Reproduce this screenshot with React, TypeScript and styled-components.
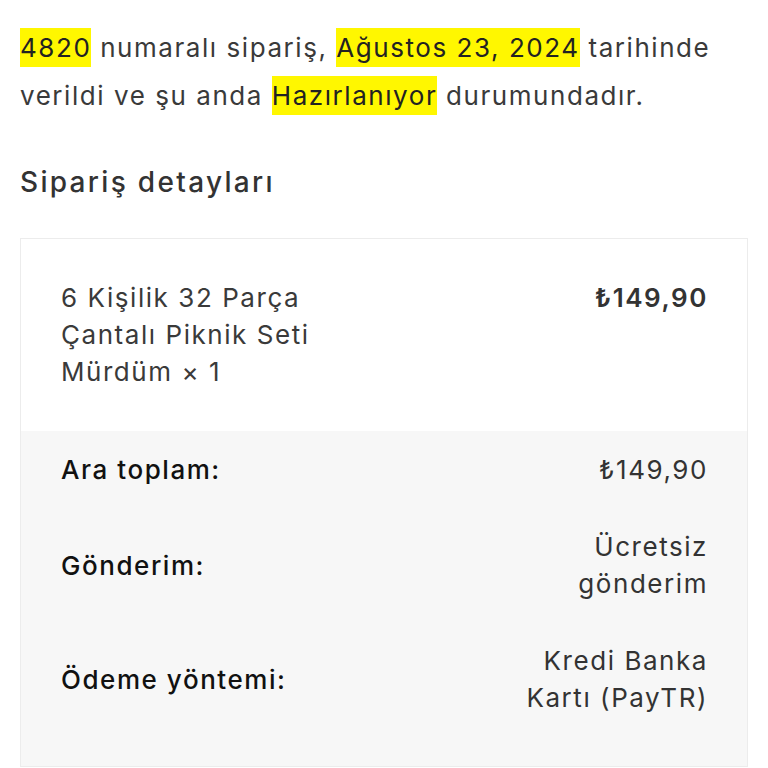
import React from 'react'
import styled, { createGlobalStyle } from 'styled-components'

const GlobalStyle = createGlobalStyle`
  body {
    margin: 0;
    background: #ffffff;
    font-family: Inter, "Noto Sans", sans-serif;
    color: #333333;
  }
`

const Page = styled.div`
  padding: 24px 20px 0 20px;
`

const Notice = styled.p`
  margin: 0;
  font-size: 26px;
  line-height: 48px;
  letter-spacing: 1.55px;
  color: #3a3a3a;
`

const Mark = styled.mark`
  background: #fff700;
  color: #222222;
  padding: 4px 0 4px 0;
`

const Heading = styled.h2`
  margin: 42px 0 36px 0;
  font-size: 28px;
  line-height: 40px;
  font-weight: 500;
  letter-spacing: 2.3px;
  color: #333333;
`

const Box = styled.div`
  border: 1px solid #ececec;
  font-size: 26px;
  line-height: 37px;
  letter-spacing: 1.55px;
`

const Row = styled.div<{ $shade?: boolean; $top?: boolean }>`
  display: flex;
  justify-content: space-between;
  align-items: ${(p) => (p.$top ? 'flex-start' : 'center')};
  padding: ${(p) => (p.$top ? '40px 39px 41px 40px' : '20px 39px 20px 40px')};
  background: ${(p) => (p.$shade ? '#f7f7f7' : '#ffffff')};
`

const ItemName = styled.div`
  max-width: 300px;
  color: #3a3a3a;
`

const Price = styled.div`
  font-weight: 600;
  color: #333333;
`

const Label = styled.div`
  font-weight: 500;
  color: #111111;
`

const Value = styled.div`
  max-width: 220px;
  text-align: right;
  color: #333333;
`

const Foot = styled.div`
  background: #f7f7f7;
  padding-bottom: 30px;
`

const totals = [
  { label: 'Ara toplam:', value: '₺149,90' },
  { label: 'Gönderim:', value: 'Ücretsiz gönderim' },
  { label: 'Ödeme yöntemi:', value: 'Kredi Banka Kartı (PayTR)' },
]

export default function App() {
  return (
    <Page>
      <GlobalStyle />
      <Notice>
        <Mark>4820</Mark> numaralı sipariş, <Mark>Ağustos 23, 2024</Mark> tarihinde verildi ve şu anda{' '}
        <Mark>Hazırlanıyor</Mark> durumundadır.
      </Notice>
      <Heading>Sipariş detayları</Heading>
      <Box>
        <Row $top>
          <ItemName>6 Kişilik 32 Parça Çantalı Piknik Seti Mürdüm × 1</ItemName>
          <Price>₺149,90</Price>
        </Row>
        <Foot>
          {totals.map((t) => (
            <Row key={t.label} $shade>
              <Label>{t.label}</Label>
              <Value>{t.value}</Value>
            </Row>
          ))}
        </Foot>
      </Box>
    </Page>
  )
}
